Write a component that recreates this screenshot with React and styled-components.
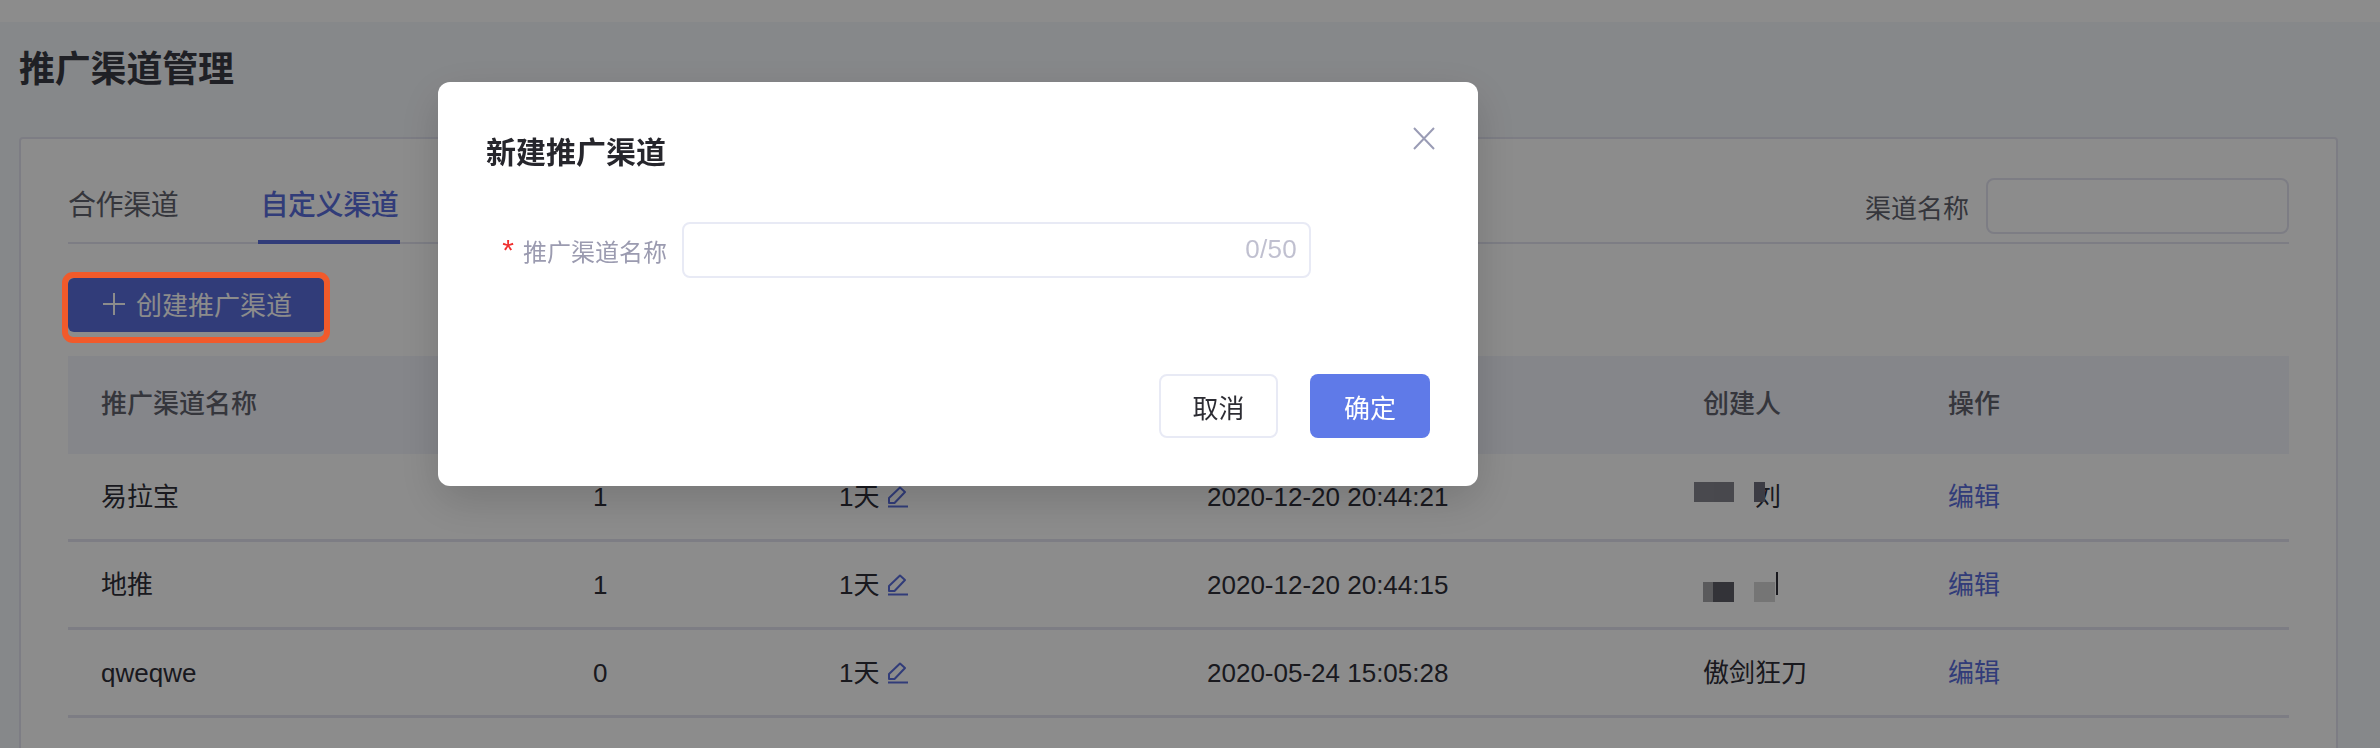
import React from 'react';
import styled, { createGlobalStyle } from 'styled-components';

const primary = '#5a6edc';
const line = '#e3e4f1';

const GlobalStyle = createGlobalStyle`
  html, body {
    margin: 0;
    height: 100%;
    overflow: hidden;
    background: #f5f7fb;
    font-family: "Liberation Sans", "Noto Sans CJK SC", sans-serif;
    color: #2e2e38;
  }
  * {
    box-sizing: border-box;
  }
`;

const Page = styled.div`
  height: 748px;
  overflow: hidden;
`;

const TopBar = styled.div`
  height: 22px;
  background: #fff;
`;

const Content = styled.main`
  padding: 0 42px 0 19px;
`;

const Title = styled.h1`
  margin: 0;
  height: 115px;
  padding-top: 25px;
  font-size: 36px;
  line-height: 46px;
  font-weight: 600;
  letter-spacing: -0.2px;
  color: #3a3b44;
`;

const Card = styled.section`
  height: 700px;
  padding: 0 47px;
  background: #fff;
  border: 2px solid ${line};
  border-radius: 4px;
`;

const TabRow = styled.div`
  display: flex;
  justify-content: space-between;
  height: 105px;
  border-bottom: 2px solid ${line};
`;

const Tabs = styled.div`
  display: flex;
  align-items: flex-end;
  gap: 78px;
`;

const Tab = styled.div`
  height: 105px;
  margin-bottom: -2px;
  padding: 47px 2px 0;
  margin-left: ${(p) => (p.$first ? '-2px' : '0')};
  font-size: 28px;
  line-height: 40px;
  letter-spacing: -0.4px;
  font-weight: ${(p) => (p.$active ? 500 : 400)};
  color: ${(p) => (p.$active ? primary : '#62636e')};
  border-bottom: 4px solid ${(p) => (p.$active ? primary : 'transparent')};
`;

const Filter = styled.div`
  display: flex;
  align-items: center;
  gap: 17px;
  padding-top: 39px;
  height: 95px;
  font-size: 26px;
  color: #62636e;
`;

const FilterInput = styled.input`
  width: 303px;
  height: 56px;
  border: 2px solid ${line};
  border-radius: 8px;
  background: #fff;
  outline: none;
`;

const Actions = styled.div`
  padding: 34px 0 24px;
`;

const CreateWrap = styled.div`
  position: relative;
  width: 257px;
`;

const CreateButton = styled.button`
  display: flex;
  align-items: center;
  justify-content: center;
  gap: 11px;
  width: 100%;
  height: 54px;
  padding: 0 0 3px 2px;
  border: none;
  border-radius: 6px;
  background: ${primary};
  color: #fff;
  font: inherit;
  font-size: 26px;
`;

const Highlight = styled.div`
  position: absolute;
  top: -6px;
  left: -6px;
  right: -5px;
  bottom: -11px;
  z-index: 20;
  border: 6px solid #f15a2b;
  border-radius: 11px;
`;

const Row = styled.div`
  display: grid;
  grid-template-columns: 492px 246px 368px 496px 245px 1fr;
  align-items: center;
  height: ${(p) => (p.$head ? '98px' : '88px')};
  padding: ${(p) => (p.$head ? '0 0 2px 33px' : '0 0 0 33px')};
  font-size: 26px;
  font-weight: ${(p) => (p.$head ? 500 : 400)};
  color: ${(p) => (p.$head ? '#62636e' : '#2e2e38')};
  background: ${(p) => (p.$head ? '#f2f4fb' : 'transparent')};
  border-bottom: ${(p) => (p.$head ? 'none' : `3px solid ${line}`)};
`;

const Cell = styled.div`
  display: flex;
  align-items: center;
  min-height: 30px;
  line-height: 30px;
  white-space: nowrap;
`;

const CreatorCell = styled(Cell)`
  position: relative;
  padding-left: ${(p) => (p.$masked ? '52px' : '0')};
`;

const Mosaic = styled.svg`
  position: absolute;
  left: ${(p) => p.$left}px;
  top: ${(p) => p.$top}px;
`;

const EditLink = styled.a`
  color: ${primary};
`;

const PencilIcon = styled.svg`
  margin-left: 9px;
  color: ${primary};
`;

const Mask = styled.div`
  position: fixed;
  inset: 0;
  z-index: 10;
  padding: 82px 0 0 438px;
  background: rgba(0, 0, 0, 0.45);
`;

const Dialog = styled.div`
  position: relative;
  display: flex;
  flex-direction: column;
  width: 1040px;
  height: 404px;
  padding: 51px 48px 48px;
  background: #fff;
  border-radius: 12px;
  box-shadow: 0 14px 44px rgba(0, 0, 0, 0.16);
`;

const DialogTitle = styled.h2`
  margin: 0;
  font-size: 30px;
  line-height: 40px;
  font-weight: 600;
  color: #26262c;
`;

const CloseIcon = styled.svg`
  position: absolute;
  top: 45px;
  right: 43px;
  color: #9a9cb5;
`;

const FormRow = styled.div`
  display: flex;
  align-items: center;
  gap: 15px;
  margin-top: 49px;
`;

const Label = styled.label`
  display: flex;
  align-items: center;
  justify-content: flex-end;
  width: 181px;
  font-size: 24px;
  white-space: nowrap;
  color: #9b9bb0;
`;

const Star = styled.span`
  margin-right: 9px;
  font-size: 30px;
  line-height: 30px;
  color: #f0302f;
`;

const InputWrap = styled.div`
  position: relative;
  width: 629px;
`;

const NameInput = styled.input`
  display: block;
  width: 100%;
  height: 56px;
  border: 2px solid #e8eaf5;
  border-radius: 8px;
  outline: none;
`;

const Counter = styled.span`
  position: absolute;
  right: 14px;
  top: 12px;
  font-size: 26px;
  line-height: 30px;
  letter-spacing: 0.3px;
  color: #c0c0d0;
`;

const Footer = styled.div`
  display: flex;
  justify-content: flex-end;
  gap: 32px;
  margin-top: auto;
`;

const DialogButton = styled.button`
  width: ${(p) => (p.$primary ? '120px' : '119px')};
  height: 64px;
  padding: 0;
  font: inherit;
  font-size: 26px;
  border-radius: 8px;
  border: ${(p) => (p.$primary ? 'none' : '2px solid #e8eaf5')};
  background: ${(p) => (p.$primary ? '#5f7ae8' : '#fff')};
  color: ${(p) => (p.$primary ? '#fff' : '#2c2c33')};
`;

const rows = [
  { name: '易拉宝', count: '1', date: '2020-12-20 20:44:21', creator: '刘', masked: 1 },
  { name: '地推', count: '1', date: '2020-12-20 20:44:15', creator: '', masked: 2 },
  { name: 'qweqwe', count: '0', date: '2020-05-24 15:05:28', creator: '傲剑狂刀' },
];

const Plus = () => (
  <svg width="22" height="22" viewBox="0 0 22 22" fill="none" stroke="currentColor" strokeWidth="2">
    <path d="M11 0v22M0 11h22" />
  </svg>
);

const Pencil = () => (
  <PencilIcon width="20" height="22" viewBox="0 0 20 22" fill="none" stroke="currentColor" strokeWidth="2">
    <path d="M1 17v-5L12 1.5 17 6 6.5 17Z" strokeLinejoin="round" />
    <path d="M0 20.5h20" />
  </PencilIcon>
);

// the names are pixelated in the screenshot
const MosaicOne = () => (
  <Mosaic $left={-9} $top={0} width="71" height="20" viewBox="0 0 71 20">
    <rect x="0" width="20" height="20" fill="#85858f" />
    <rect x="20" width="20" height="20" fill="#83838d" />
    <rect x="60" width="11" height="20" fill="#6e6e7c" />
  </Mosaic>
);

const MosaicTwo = () => (
  <Mosaic $left={0} $top={2} width="75" height="30" viewBox="0 0 75 30">
    <rect x="0" y="10" width="10" height="20" fill="#a5a5a8" />
    <rect x="10" y="10" width="21" height="20" fill="#5d5d66" />
    <rect x="51" y="10" width="21" height="20" fill="#d6d6d6" />
    <rect x="73" y="0" width="2" height="23" fill="#2e2e38" />
  </Mosaic>
);

const App = () => (
  <Page>
    <GlobalStyle />
    <TopBar />
    <Content>
      <Title>推广渠道管理</Title>
      <Card>
        <TabRow>
          <Tabs>
            <Tab $first>合作渠道</Tab>
            <Tab $active>自定义渠道</Tab>
          </Tabs>
          <Filter>
            渠道名称
            <FilterInput />
          </Filter>
        </TabRow>
        <Actions>
          <CreateWrap>
            <CreateButton>
              <Plus />
              创建推广渠道
            </CreateButton>
            <Highlight />
          </CreateWrap>
        </Actions>
        <Row $head>
          <Cell>推广渠道名称</Cell>
          <Cell />
          <Cell />
          <Cell />
          <Cell>创建人</Cell>
          <Cell>操作</Cell>
        </Row>
        {rows.map((row) => (
          <Row key={row.date}>
            <Cell>{row.name}</Cell>
            <Cell>{row.count}</Cell>
            <Cell>
              1天
              <Pencil />
            </Cell>
            <Cell>{row.date}</Cell>
            <CreatorCell $masked={row.masked === 1}>
              {row.creator}
              {row.masked === 1 && <MosaicOne />}
              {row.masked === 2 && <MosaicTwo />}
            </CreatorCell>
            <Cell>
              <EditLink>编辑</EditLink>
            </Cell>
          </Row>
        ))}
      </Card>
    </Content>
    <Mask>
      <Dialog>
        <DialogTitle>新建推广渠道</DialogTitle>
        <CloseIcon width="22" height="23" viewBox="0 0 22 23" fill="none" stroke="currentColor" strokeWidth="2">
          <path d="M1 1l20 21M21 1 1 22" />
        </CloseIcon>
        <FormRow>
          <Label>
            <Star>*</Star>
            推广渠道名称
          </Label>
          <InputWrap>
            <NameInput />
            <Counter>0/50</Counter>
          </InputWrap>
        </FormRow>
        <Footer>
          <DialogButton>取消</DialogButton>
          <DialogButton $primary>确定</DialogButton>
        </Footer>
      </Dialog>
    </Mask>
  </Page>
);

export default App;
